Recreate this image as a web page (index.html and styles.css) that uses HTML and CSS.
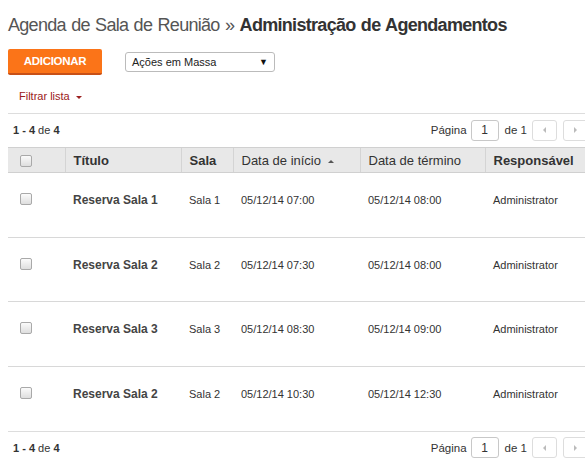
FILE: index.html
```html
<!DOCTYPE html>
<html lang="pt">
<head>
<meta charset="utf-8">
<title>Administração de Agendamentos</title>
<link rel="stylesheet" href="styles.css">
</head>
<body>
<div class="page">
  <h1 class="title">Agenda de Sala de Reunião » <strong>Administração de Agendamentos</strong></h1>
  <div class="toolbar">
    <button class="btn-add" type="button">ADICIONAR</button>
    <div class="select"><span>Ações em Massa</span><span class="sel-arrow">▼</span></div>
  </div>
  <div class="filter">Filtrar lista <span class="caret"></span></div>
  <div class="pager-bar top">
    <div class="count"><b>1 - 4</b> de <b>4</b></div>
    <div class="pager">
      <span class="lbl">Página</span>
      <span class="page-input">1</span>
      <span class="lbl">de 1</span>
      <span class="pbtn prev"><span class="tri left"></span></span>
      <span class="pbtn next"><span class="tri right"></span></span>
    </div>
  </div>
  <table class="grid">
    <colgroup>
      <col class="c-check"><col class="c-title"><col class="c-sala"><col class="c-ini"><col class="c-fim"><col class="c-resp">
    </colgroup>
    <thead>
      <tr>
        <th><span class="cb"></span></th>
        <th class="b">Título</th>
        <th class="b">Sala</th>
        <th>Data de início <span class="sort"></span></th>
        <th>Data de término</th>
        <th class="b">Responsável</th>
      </tr>
    </thead>
    <tbody>
      <tr><td><span class="cb"></span></td><td class="name">Reserva Sala 1</td><td>Sala 1</td><td>05/12/14 07:00</td><td>05/12/14 08:00</td><td>Administrator</td></tr>
      <tr><td><span class="cb"></span></td><td class="name">Reserva Sala 2</td><td>Sala 2</td><td>05/12/14 07:30</td><td>05/12/14 08:00</td><td>Administrator</td></tr>
      <tr><td><span class="cb"></span></td><td class="name">Reserva Sala 3</td><td>Sala 3</td><td>05/12/14 08:30</td><td>05/12/14 09:00</td><td>Administrator</td></tr>
      <tr><td><span class="cb"></span></td><td class="name">Reserva Sala 2</td><td>Sala 2</td><td>05/12/14 10:30</td><td>05/12/14 12:30</td><td>Administrator</td></tr>
    </tbody>
  </table>
  <div class="pager-bar bottom">
    <div class="count"><b>1 - 4</b> de <b>4</b></div>
    <div class="pager">
      <span class="lbl">Página</span>
      <span class="page-input">1</span>
      <span class="lbl">de 1</span>
      <span class="pbtn prev"><span class="tri left"></span></span>
      <span class="pbtn next"><span class="tri right"></span></span>
    </div>
  </div>
</div>
</body>
</html>
```

FILE: styles.css
```css
html, body {
  margin: 0;
  padding: 0;
  background: #fff;
  overflow: hidden;
}
body {
  font-family: "Liberation Sans", Arial, sans-serif;
  color: #333;
}
.page {
  width: 580px;
  padding: 13px 0 0 8px;
}
.title {
  margin: 0;
  font-size: 18px;
  line-height: 24px;
  font-weight: normal;
  color: #555;
  white-space: nowrap;
  letter-spacing: -0.7px;
  word-spacing: 1px;
}
.title strong {
  color: #333;
  font-weight: bold;
}
.toolbar {
  display: flex;
  align-items: center;
  gap: 23px;
  margin-top: 12px;
}
.btn-add {
  width: 94px;
  height: 26px;
  border: 0;
  border-bottom: 2px solid #c85016;
  border-radius: 2px;
  background: #fb7418;
  color: #fff;
  font-family: "Liberation Sans", Arial, sans-serif;
  font-weight: bold;
  font-size: 11.5px;
  letter-spacing: -0.3px;
  padding: 0;
}
.select {
  height: 18px;
  border: 1px solid #bbb;
  border-radius: 3px;
  display: flex;
  align-items: center;
  justify-content: space-between;
  padding: 0 6px;
  width: 136px;
  font-size: 11px;
  color: #222;
}
.sel-arrow {
  font-size: 9px;
  color: #111;
}
.filter {
  margin: 14px 0 0 11px;
  font-size: 11px;
  line-height: 14px;
  color: #9b2020;
}
.caret {
  display: inline-block;
  width: 0;
  height: 0;
  border-left: 3px solid transparent;
  border-right: 3px solid transparent;
  border-top: 3px solid #9b2020;
  vertical-align: middle;
  margin-left: 3px;
}
.pager-bar {
  display: flex;
  justify-content: space-between;
  align-items: center;
  font-size: 11px;
  color: #333;
  border-top: 1px solid #ddd;
  height: 32px;
}
.pager-bar.top {
  margin-top: 10px;
}
.count {
  padding-left: 5px;
}
.pager {
  display: flex;
  align-items: center;
}
.lbl {
  font-size: 11.5px;
}
.page-input {
  width: 26px;
  height: 19px;
  border: 1px solid #c8c8c8;
  border-radius: 3px;
  display: flex;
  align-items: center;
  justify-content: center;
  font-size: 12px;
  margin: 0 6px 0 4px;
}
.pbtn {
  width: 23px;
  height: 19px;
  border: 1px solid #ddd;
  border-radius: 3px;
  display: flex;
  align-items: center;
  justify-content: center;
  margin-left: 6px;
}
.pbtn.prev {
  margin-left: 5px;
}
.tri {
  width: 0;
  height: 0;
  border-top: 3px solid transparent;
  border-bottom: 3px solid transparent;
}
.tri.left {
  border-right: 3px solid #bbb;
}
.tri.right {
  border-left: 3px solid #bbb;
}
.grid {
  width: 100%;
  table-layout: fixed;
  border-collapse: collapse;
  margin-top: 1px;
}
.c-check { width: 57px; }
.c-title { width: 116px; }
.c-sala { width: 52px; }
.c-ini { width: 127px; }
.c-fim { width: 125px; }
.c-resp { width: 103px; }
.grid th {
  background: #e8e8e8;
  border-top: 1px solid #d0d0d0;
  border-bottom: 1px solid #d0d0d0;
  border-left: 1px solid #d4d4d4;
  height: 24px;
  padding: 0 8px;
  text-align: left;
  font-size: 13px;
  font-weight: normal;
  color: #333;
  white-space: nowrap;
}
.grid th:first-child {
  border-left: 0;
  padding-left: 12px;
}
.grid th.b {
  font-weight: bold;
}
.sort {
  display: inline-block;
  width: 0;
  height: 0;
  border-left: 3px solid transparent;
  border-right: 3px solid transparent;
  border-bottom: 3px solid #555;
  vertical-align: middle;
  margin-left: 3px;
}
.grid td {
  vertical-align: top;
  padding: 20px 8px 29.67px;
  height: 14px;
  line-height: 14px;
  font-size: 11px;
  color: #333;
  white-space: nowrap;
  border-bottom: 1px solid #d8d8d8;
}
.grid td:first-child {
  padding-left: 12px;
}
.grid tbody tr:last-child td {
  border-bottom: 0;
}
.grid td.name {
  font-size: 12px;
  font-weight: bold;
  color: #444;
}
.cb {
  display: inline-block;
  box-sizing: border-box;
  width: 12px;
  height: 12px;
  border: 1px solid #a9a9a9;
  border-radius: 2px;
  background: linear-gradient(#fbfbfb, #dedede);
  vertical-align: middle;
}
.grid td .cb {
  display: block;
}
```
